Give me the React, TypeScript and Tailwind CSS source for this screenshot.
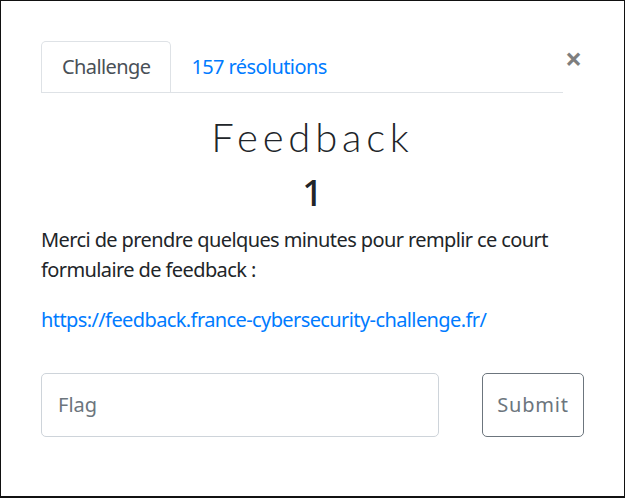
import React from "react";

export default function App() {
  const sans = { fontFamily: '"Noto Sans", "Open Sans", sans-serif' };
  return (
    <div className="w-[625px] h-[498px] bg-[#111] pt-px pl-px pr-px pb-[2px] overflow-hidden" style={sans}>
      <div className="h-full w-[623px] bg-white pl-[40px] pr-[40px]">
        <div className="flex items-start pt-[40px]">
          <div className="flex w-[522px] border-b border-[#dee2e6]">
            <div className="h-[51px] px-[20px] flex items-center border border-b-0 border-[#dee2e6] rounded-t-[5px] bg-white text-[20px] leading-[30px] text-[#495057] tracking-[-0.03em] -mb-px">
              Challenge
            </div>
            <div className="h-[51px] px-[20px] flex items-center text-[20px] leading-[30px] text-[#007bff] tracking-[-0.03em]">
              157 résolutions
            </div>
          </div>
          <div className="ml-[2px] mt-[3px] text-[30px] leading-[30px] font-bold text-[#000] opacity-50">×</div>
        </div>
        <div className="text-center mt-[20px] text-[40px] leading-[48px] font-light tracking-[0.12em] text-[#212529]" style={{ fontFamily: 'Lato, "Open Sans", sans-serif' }}>
          Feedback
        </div>
        <div className="text-center mt-[10px] text-[36px] leading-[44px] font-medium text-[#212529]">1</div>
        <p className="mt-[10px] text-[20px] leading-[30px] text-[#212529] tracking-[-0.03em]">
          Merci de prendre quelques minutes pour remplir ce court formulaire de feedback :
        </p>
        <p className="mt-[20px] text-[20px] leading-[30px] text-[#007bff] tracking-[-0.03em]">
          https://feedback.france-cybersecurity-challenge.fr/
        </p>
        <div className="flex mt-[38px] items-stretch">
          <div className="w-[398px] h-[64px] border border-[#ced4da] rounded-[5px] flex items-center pl-[16px] text-[20px] text-[#6c757d]">
            Flag
          </div>
          <div className="ml-[43px] w-[102px] h-[64px] border border-[#6c757d] rounded-[5px] flex items-center justify-center text-[20px] text-[#6c757d] tracking-[0.04em]">
            Submit
          </div>
        </div>
      </div>
    </div>
  );
}
